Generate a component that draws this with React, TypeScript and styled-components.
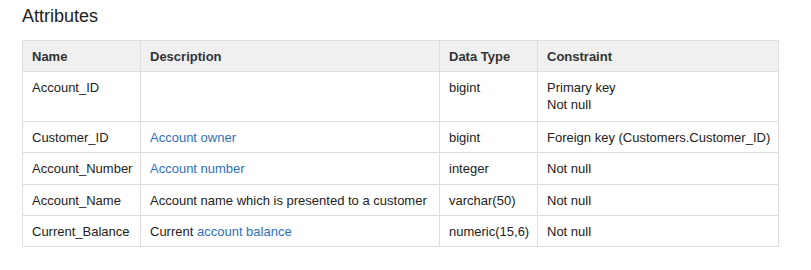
import React from 'react';
import styled, { createGlobalStyle } from 'styled-components';

const GlobalStyle = createGlobalStyle`
body {
    margin: 0;
    background: #ffffff;
    font-family: "Liberation Sans", Arial, sans-serif;
    color: #333333;
}
`;

const Page = styled.div`
padding: 6px 22px 0 22px;
`;

const Heading = styled.h2`
margin: 0 0 13px 0;
font-size: 18px;
font-weight: normal;
line-height: 21px;
color: #222222;
`;

const Table = styled.table`
border-collapse: collapse;
table-layout: fixed;
width: 756px;
font-size: 13px;
line-height: 17px;
`;

const HeadCell = styled.th`
background: #f0f0f0;
border: 1px solid #dddddd;
padding: 7px 9px 6px 9px;
text-align: left;
font-weight: bold;
color: #333333;
`;

const Row = styled.tr<{ $h?: number }>`
height: ${p => p.$h ?? 31}px;
`;

const Cell = styled.td`
border: 1px solid #dddddd;
padding: 7px 9px 6px 9px;
vertical-align: top;
color: #222222;
white-space: nowrap;
`;

const Link = styled.a`
color: #2f6fbf;
text-decoration: none;
`;

type Attr = {
    name: string;
    description: React.ReactNode;
    type: string;
    constraint: React.ReactNode;
    height?: number;
};

const attributes: Attr[] = [
    { name: 'Account_ID', description: '', type: 'bigint', constraint: <>Primary key<br />Not null</>, height: 50 },
    { name: 'Customer_ID', description: <Link href="#">Account owner</Link>, type: 'bigint', constraint: 'Foreign key (Customers.Customer_ID)' },
    { name: 'Account_Number', description: <Link href="#">Account number</Link>, type: 'integer', constraint: 'Not null', height: 32 },
    { name: 'Account_Name', description: 'Account name which is presented to a customer', type: 'varchar(50)', constraint: 'Not null' },
    { name: 'Current_Balance', description: <>Current <Link href="#">account balance</Link></>, type: 'numeric(15,6)', constraint: 'Not null' },
];

const App = () => {
    return (
        <>
            <GlobalStyle />
            <Page>
                <Heading>Attributes</Heading>
                <Table>
                    <colgroup>
                        <col style={{ width: 118 }} />
                        <col style={{ width: 299 }} />
                        <col style={{ width: 98 }} />
                        <col style={{ width: 241 }} />
                    </colgroup>
                    <thead>
                        <Row>
                            <HeadCell>Name</HeadCell>
                            <HeadCell>Description</HeadCell>
                            <HeadCell>Data Type</HeadCell>
                            <HeadCell>Constraint</HeadCell>
                        </Row>
                    </thead>
                    <tbody>
                        {attributes.map(a => (
                            <Row key={a.name} $h={a.height}>
                                <Cell>{a.name}</Cell>
                                <Cell>{a.description}</Cell>
                                <Cell>{a.type}</Cell>
                                <Cell>{a.constraint}</Cell>
                            </Row>
                        ))}
                    </tbody>
                </Table>
            </Page>
        </>
    );
};

export default App;
